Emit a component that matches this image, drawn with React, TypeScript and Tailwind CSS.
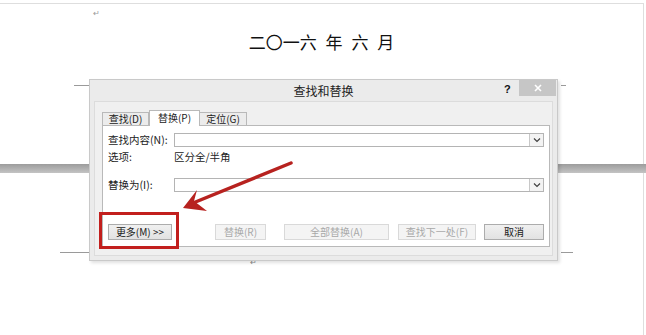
import React from "react";

const cjk = { fontFamily: '"Noto Sans CJK SC", "Noto Sans", sans-serif' };

function Btn({ w, label, disabled, ml }: { w: string; label: string; disabled?: boolean; ml?: string }) {
  return (
    <div
      className={`${w} ${ml ?? ""} h-[16px] flex items-center justify-center text-[10px] leading-none border ${
        disabled
          ? "border-[#d9d9d9] bg-[#f4f4f4] text-[#a8a8a8]"
          : "border-[#acacac] bg-gradient-to-b from-[#f0f0f0] to-[#e2e2e2] text-[#1a1a1a]"
      }`}
    >
      {label}
    </div>
  );
}

function Combo() {
  return (
    <div className="w-[370px] h-[14px] border border-[#b4b4b4] bg-white flex justify-end">
      <div className="w-[14px] h-full border-l border-[#c8c8c8] bg-[#f3f3f3] flex items-center justify-center">
        <svg width="8" height="6" viewBox="0 0 8 6">
          <path d="M1 1.5 L4 4.5 L7 1.5" stroke="#404040" strokeWidth="1.2" fill="none" />
        </svg>
      </div>
    </div>
  );
}

export default function App() {
  return (
    <div className="relative w-[646px] h-[335px] bg-white overflow-hidden" style={cjk}>
      {/* page 1 */}
      <div className="mt-[3px] w-[644px] h-[161px] border-t border-r border-[#dedede]">
        <div className="ml-[93px] mt-[5px] h-[10px] text-[8px] leading-none text-[#9a9a9a]">↵</div>
        <div className="mt-[14px] text-center text-[17px] leading-none text-[#111] [word-spacing:5px]">
          二〇一六 年 六 月
        </div>
        <div className="mt-[35px] flex">
          <div className="ml-[74px] w-[16px] h-px bg-[#9a9a9a]" />
          <div className="ml-[471px] w-[5px] h-px bg-[#9a9a9a]" />
        </div>
      </div>
      {/* gap between pages */}
      <div className="h-[9px] bg-gradient-to-b from-[#9c9c9c] to-[#c4c4c4]" />
      {/* page 2 */}
      <div className="w-[644px] h-[162px] border-r border-[#dedede]">
        <div className="pt-[79px] flex">
          <div className="ml-[60px] w-[30px] h-px bg-[#9a9a9a]" />
          <div className="ml-[471px] w-[12px] h-px bg-[#9a9a9a]" />
        </div>
        <div className="ml-[250px] mt-[5px] text-[8px] leading-none text-[#8a8a8a]">↵</div>
      </div>

      {/* dialog */}
      <div className="absolute left-[89px] top-[79px] w-[469px] h-[182px] border border-[#c9c9c9] bg-[#ebebeb] shadow-[2px_2px_3px_rgba(0,0,0,0.12)] flex flex-col">
        <div className="h-[21px] relative flex items-center justify-center">
          <span className="text-[12px] text-[#222] leading-none">查找和替换</span>
          <span
            className="absolute left-[414px] top-[4px] text-[11px] font-bold leading-none text-[#111]"
            style={{ fontFamily: '"Liberation Sans", sans-serif' }}
          >
            ?
          </span>
          <div className="absolute left-[429px] top-0 w-[37px] h-[16px] bg-[#c6c6c6] flex items-center justify-center">
            <svg width="8" height="8" viewBox="0 0 8 8">
              <path d="M1 1 L7 7 M7 1 L1 7" stroke="#ffffff" strokeWidth="1.6" />
            </svg>
          </div>
        </div>
        <div className="ml-[4px] mr-[4px] mb-[4px] flex-1 border border-[#dcdcdc] bg-[#f0f0f0] pl-[7px] pr-[3px] pt-[7px]">
          {/* tabs */}
          <div className="flex items-end h-[16px]">
            <div className="w-[47px] h-[13px] border border-b-0 border-[#b9b9b9] bg-[#ececec] text-[10px] leading-none flex items-center justify-center text-[#222]">
              查找(D)
            </div>
            <div className="w-[51px] h-[16px] border border-b-0 border-[#b9b9b9] bg-white text-[10px] leading-none flex items-center justify-center text-[#222] relative z-10 -mb-px pb-[2px]">
              替换(P)
            </div>
            <div className="w-[47px] h-[13px] border border-b-0 border-l-0 border-[#b9b9b9] bg-[#ececec] text-[10px] leading-none flex items-center justify-center text-[#222]">
              定位(G)
            </div>
          </div>
          {/* panel */}
          <div className="w-[448px] h-[122px] border border-[#b9b9b9] bg-white pl-[5px] pt-[7px] text-[10.5px] text-[#222] leading-none">
            <div className="flex items-center">
              <div className="w-[66px]">查找内容(N):</div>
              <Combo />
            </div>
            <div className="flex items-center mt-[3px] h-[14px]">
              <div className="w-[66px]">选项:</div>
              <div>区分全/半角</div>
            </div>
            <div className="flex items-center mt-[14px]">
              <div className="w-[66px]">替换为(I):</div>
              <Combo />
            </div>
            <div className="flex mt-[32px]">
              <Btn w="w-[64px]" label="更多(M) >>" />
              <Btn w="w-[51px]" ml="ml-[43px]" label="替换(R)" disabled />
              <Btn w="w-[105px]" ml="ml-[18px]" label="全部替换(A)" disabled />
              <Btn w="w-[78px]" ml="ml-[9px]" label="查找下一处(F)" disabled />
              <Btn w="w-[60px]" ml="ml-[8px]" label="取消" />
            </div>
          </div>
        </div>
      </div>

      {/* red highlight box */}
      <div className="absolute left-[99px] top-[212px] w-[80px] h-[37px] border-[3px] border-[#c21f1d]" />

      {/* red arrow */}
      <svg className="absolute left-0 top-0" width="646" height="335" viewBox="0 0 646 335">
        <line x1="291" y1="163" x2="193" y2="203" stroke="#b7221f" strokeWidth="3.5" strokeLinecap="round" />
        <polygon points="183,208 197,190 194,201 207,211" fill="#b7221f" />
      </svg>
    </div>
  );
}
